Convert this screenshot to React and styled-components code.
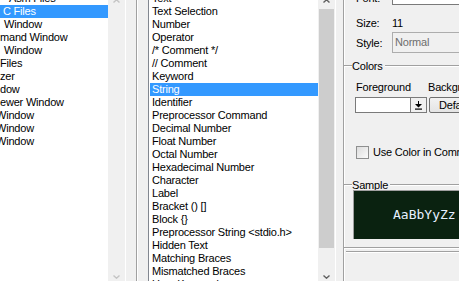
import React from 'react';
import styled, { createGlobalStyle } from 'styled-components';

const GlobalStyle = createGlobalStyle`
  html, body {
    margin: 0;
    padding: 0;
    background: #f0f0f0;
    overflow: hidden;
  }
  body {
    font-family: 'Liberation Sans', Arial, sans-serif;
    font-size: 11px;
    color: #000;
  }
`;

const Dialog = styled.div`
  width: 459px;
  height: 281px;
  overflow: hidden;
  display: flex;
  align-items: flex-start;
  background: #f0f0f0;
  letter-spacing: -0.2px;
`;

const ListBox = styled.div`
  flex: none;
  display: flex;
  box-sizing: border-box;
  width: ${p => p.$width}px;
  height: 294px;
  margin-top: -9px;
  background: #fff;
  border-left: ${p => (p.$framed ? '1px solid #828790' : 'none')};
  border-right: 1px solid #fff;
  padding-left: ${p => (p.$framed ? 1 : 0)}px;
`;

const Items = styled.ul`
  flex: 1;
  margin: 0;
  padding: 1px 0 0;
  list-style: none;
  overflow: hidden;
`;

const Item = styled.li`
  height: 13px;
  line-height: 13px;
  white-space: nowrap;
  padding-left: ${p => p.$pad}px;
  text-indent: ${p => p.$indent || 0}px;
  background: ${p => (p.$selected ? '#3399ff' : 'transparent')};
  color: ${p => (p.$selected ? '#fff' : p.$color)};
`;

const ScrollBar = styled.div`
  flex: none;
  width: 17px;
  display: flex;
  flex-direction: column;
  background: #f0f0f0;
`;

const ArrowButton = styled.div`
  flex: none;
  height: 17px;
  display: flex;
  align-items: center;
  justify-content: center;
  color: ${p => (p.$disabled ? '#c4c4c4' : '#606060')};
  padding-top: ${p => (p.$up ? 3 : 0)}px;
  box-sizing: border-box;
`;

const Thumb = styled.div`
  flex: none;
  height: ${p => p.$size}px;
  margin: 1px 1px 0;
  background: #cdcdcd;
`;

const Track = styled.div`
  flex: 1;
`;

const Splitter = styled.div`
  flex: none;
  width: 0;
  height: 281px;
  margin: 0 10px;
  border-left: 1px solid #a0a0a0;
  border-right: 1px solid #fff;
`;

const RightPanel = styled.div`
  flex: none;
  width: 116px;
  height: 281px;
  margin-left: 7px;
  box-sizing: border-box;
  border-left: 1px solid #a0a0a0;
  box-shadow: inset 1px 0 #fff;
  display: flex;
  flex-direction: column;
`;

const FieldRow = styled.div`
  flex: none;
  display: flex;
  align-items: flex-start;
  height: ${p => p.$height}px;
  margin-top: ${p => p.$top}px;
  padding-left: 12px;
  white-space: nowrap;
`;

const Label = styled.span`
  flex: none;
  width: ${p => p.$width || 36}px;
  line-height: 13px;
  padding-top: ${p => p.$drop || 0}px;
`;

const Value = styled.span`
  line-height: 13px;
`;

const ComboBox = styled.div`
  flex: none;
  width: 90px;
  height: 21px;
  box-sizing: border-box;
  border: 1px solid ${p => (p.$disabled ? '#adadad' : '#7a7a7a')};
  background: ${p => (p.$disabled ? '#f0f0f0' : '#fff')};
  color: ${p => (p.$disabled ? '#6d6d6d' : '#000')};
  padding: 3px 0 0 2px;
  line-height: 13px;
`;

const GroupHeader = styled.div`
  flex: none;
  display: flex;
  align-items: flex-start;
  height: 13px;
  line-height: 13px;
  margin-top: ${p => p.$top}px;
  &::before,
  &::after {
    content: '';
    height: 0;
    margin-top: 5px;
    border-top: 1px solid #a0a0a0;
    border-bottom: 1px solid #fff;
  }
  &::before {
    width: 8px;
  }
  &::after {
    flex: 1;
    margin-left: 2px;
  }
`;

const ColorRow = styled.div`
  flex: none;
  display: flex;
  gap: 2px;
  margin-top: ${p => p.$top}px;
  padding-left: 11px;
`;

const ColorPicker = styled.div`
  flex: none;
  display: flex;
  width: 72px;
  height: 16px;
  box-sizing: border-box;
  border: 1px solid #7a7a7a;
  background: #fff;
`;

const Swatch = styled.div`
  flex: 1;
  border-right: 1px solid #7a7a7a;
`;

const DropButton = styled.div`
  flex: none;
  width: 15px;
  display: flex;
  align-items: center;
  justify-content: center;
  background: #f0f0f0;
`;

const PushButton = styled.div`
  flex: none;
  width: 70px;
  height: 16px;
  box-sizing: border-box;
  border: 1px solid #707070;
  border-radius: 2px;
  background: linear-gradient(#f2f2f2, #e4e4e4);
  line-height: 14px;
  padding-left: 9px;
`;

const CheckRow = styled.label`
  flex: none;
  display: flex;
  align-items: flex-start;
  gap: 4px;
  margin-top: ${p => p.$top}px;
  padding-left: 12px;
  line-height: 13px;
  white-space: nowrap;
`;

const CheckBox = styled.span`
  flex: none;
  width: 13px;
  height: 13px;
  box-sizing: border-box;
  border: 1px solid #8e8f8f;
  background: linear-gradient(135deg, #dcdcdc, #fbfbfb);
`;

const SampleBox = styled.div`
  flex: none;
  height: 49px;
  margin: ${p => p.$top}px 0 0 9px;
  box-sizing: border-box;
  border-top: 1px solid #a0a0a0;
  border-left: 1px solid #a0a0a0;
  background: #0a2210;
  color: #e6f0ff;
  font-family: 'DejaVu Sans Mono', 'Liberation Mono', monospace;
  font-size: 13px;
  letter-spacing: 0;
  line-height: 47px;
  padding-left: 39px;
  white-space: nowrap;
`;

const EdgeLine = styled.div`
  flex: none;
  margin: ${p => p.$top}px 0 0 ${p => p.$inset || 0}px;
  border-top: 1px solid #a0a0a0;
  border-bottom: 1px solid #fff;
`;

const Chevron = ({ up }) => (
  <svg width="7" height="4" viewBox="0 0 7 4">
    <path
      d={up ? 'M0.5 3.5 L3.5 0.8 L6.5 3.5' : 'M0.5 0.5 L3.5 3.2 L6.5 0.5'}
      fill="none"
      stroke="currentColor"
      strokeWidth="1.4"
    />
  </svg>
);

const DropArrow = () => (
  <svg width="7" height="9" viewBox="0 0 7 9">
    <path d="M3 0h1v3h3L3.5 6.5 0 3h3z" fill="#000" />
    <rect x="0" y="7.5" width="7" height="1.2" fill="#000" />
  </svg>
);

const leftItems = [
  { text: 'Asm Files', pad: 9 },
  { text: 'C Files', pad: 3, selected: true },
  { text: 'Window', pad: 4 },
  { text: 'mand Window', pad: 0 },
  { text: 'Window', pad: 4 },
  { text: 'Files', pad: 0 },
  { text: 'zer', pad: 0 },
  { text: 'dow', pad: 0 },
  { text: 'ewer Window', pad: 0 },
  { text: 'Window', pad: 0, indent: -4 },
  { text: 'Window', pad: 0, indent: -4 },
  { text: 'Window', pad: 0, indent: -4 },
];

const styleItems = [
  'Text',
  'Text Selection',
  'Number',
  'Operator',
  '/* Comment */',
  '// Comment',
  'Keyword',
  'String',
  'Identifier',
  'Preprocessor Command',
  'Decimal Number',
  'Float Number',
  'Octal Number',
  'Hexadecimal Number',
  'Character',
  'Label',
  'Bracket () []',
  'Block {}',
  'Preprocessor String <stdio.h>',
  'Hidden Text',
  'Matching Braces',
  'Mismatched Braces',
  'User Keywords',
];

const App = () => {
  return (
    <>
      <GlobalStyle />
      <Dialog>
        <ListBox $width={126}>
          <Items>
            {leftItems.map((it, i) => (
              <Item key={i} $pad={it.pad} $indent={it.indent} $selected={it.selected} $color="#000">
                {it.text}
              </Item>
            ))}
          </Items>
          <ScrollBar>
            <ArrowButton $up $disabled>
              <Chevron up />
            </ArrowButton>
            <Track />
            <ArrowButton $disabled>
              <Chevron />
            </ArrowButton>
          </ScrollBar>
        </ListBox>

        <Splitter />

        <ListBox $width={188} $framed>
          <Items>
            {styleItems.map((text, i) => (
              <Item key={text} $pad={2} $selected={i === 7} $color="#000">
                {text}
              </Item>
            ))}
          </Items>
          <ScrollBar>
            <ArrowButton $up>
              <Chevron up />
            </ArrowButton>
            <Thumb $size={239} />
            <Track />
            <ArrowButton>
              <Chevron />
            </ArrowButton>
          </ScrollBar>
        </ListBox>

        <RightPanel>
          <FieldRow $height={21} $top={-16}>
            <Label $drop={8}>Font:</Label>
            <ComboBox>Microsoft YaHei</ComboBox>
          </FieldRow>
          <FieldRow $height={13} $top={12}>
            <Label>Size:</Label>
            <Value>11</Value>
          </FieldRow>
          <FieldRow $height={21} $top={2}>
            <Label $drop={5}>Style:</Label>
            <ComboBox $disabled>Normal</ComboBox>
          </FieldRow>

          <GroupHeader $top={7}>
            <span>Colors</span>
          </GroupHeader>
          <FieldRow $height={13} $top={8}>
            <Label $width={72}>Foreground</Label>
            <Value>Background</Value>
          </FieldRow>
          <ColorRow $top={3}>
            <ColorPicker>
              <Swatch />
              <DropButton>
                <DropArrow />
              </DropButton>
            </ColorPicker>
            <PushButton>Default</PushButton>
          </ColorRow>
          <CheckRow $top={33}>
            <CheckBox />
            <span>Use Color in Comment</span>
          </CheckRow>

          <GroupHeader $top={20}>
            <span>Sample</span>
          </GroupHeader>
          <SampleBox $top={-2}>AaBbYyZz</SampleBox>
          <EdgeLine $top={8} />
          <EdgeLine $top={2} $inset={2} />
        </RightPanel>
      </Dialog>
    </>
  );
};

export default App;
